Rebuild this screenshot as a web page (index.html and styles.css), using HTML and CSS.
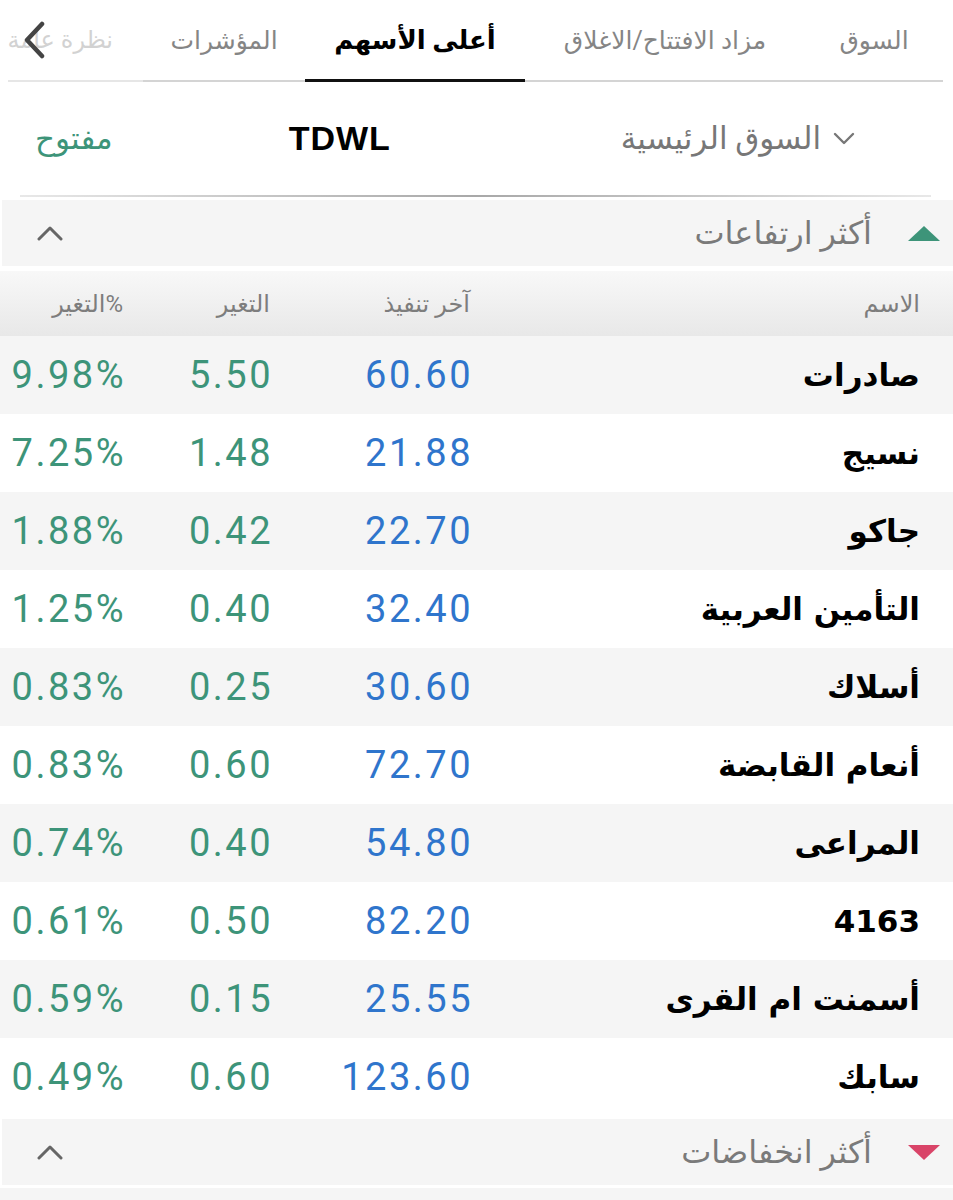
FILE: index.html
```html
<!DOCTYPE html>
<html lang="ar" dir="rtl">
<head>
    <meta charset="UTF-8">
    <meta name="viewport" content="width=device-width, initial-scale=1.0">
    <title>أعلى الأسهم - TDWL</title>
    <link rel="stylesheet" href="styles.css">
</head>
<body>
    <!-- Tabs -->
    <nav class="tabs">
        <a href="#" class="tab">السوق</a>
        <a href="#" class="tab">مزاد الافتتاح/الاغلاق</a>
        <a href="#" class="tab tab-active">أعلى الأسهم</a>
        <a href="#" class="tab">المؤشرات</a>
        <a href="#" class="tab tab-faded">نظرة عامة</a>
        <button class="back-btn" aria-label="back">
            <svg width="24" height="38" viewBox="0 0 24 38">
                <path d="M20 3 L5 19 L20 35" fill="none" stroke="#444" stroke-width="4.5" stroke-linecap="round" stroke-linejoin="round"/>
            </svg>
        </button>
    </nav>

    <!-- Market bar -->
    <div class="market-bar">
        <div class="market-select">
            <svg width="22" height="13" viewBox="0 0 22 13">
                <path d="M2 2 L11 11 L20 2" fill="none" stroke="#777" stroke-width="2.4" stroke-linecap="round" stroke-linejoin="round"/>
            </svg>
            <span>السوق الرئيسية</span>
        </div>
        <div class="market-code">TDWL</div>
        <div class="market-status">مفتوح</div>
    </div>
    <div class="divider"></div>

    <!-- Top gainers -->
    <section class="movers">
        <div class="movers-head">
            <span class="tri tri-up"></span>
            <span class="movers-title">أكثر ارتفاعات</span>
            <svg class="collapse" width="28" height="16" viewBox="0 0 28 16">
                <path d="M3 14 L14 3 L25 14" fill="none" stroke="#666" stroke-width="3" stroke-linecap="round" stroke-linejoin="round"/>
            </svg>
        </div>

        <div class="table-head">
            <span>الاسم</span>
            <span>آخر تنفيذ</span>
            <span>التغير</span>
            <span>%التغير</span>
        </div>

        <ul class="rows" id="gainers"></ul>
    </section>

    <!-- Top losers -->
    <section class="movers movers-down">
        <div class="movers-head">
            <span class="tri tri-down"></span>
            <span class="movers-title">أكثر انخفاضات</span>
            <svg class="collapse" width="28" height="16" viewBox="0 0 28 16">
                <path d="M3 14 L14 3 L25 14" fill="none" stroke="#666" stroke-width="3" stroke-linecap="round" stroke-linejoin="round"/>
            </svg>
        </div>
        <div class="movers-rest"></div>
    </section>

    <script>
        const gainers = [
            ["صادرات", "60.60", "5.50", "9.98%"],
            ["نسيج", "21.88", "1.48", "7.25%"],
            ["جاكو", "22.70", "0.42", "1.88%"],
            ["التأمين العربية", "32.40", "0.40", "1.25%"],
            ["أسلاك", "30.60", "0.25", "0.83%"],
            ["أنعام القابضة", "72.70", "0.60", "0.83%"],
            ["المراعى", "54.80", "0.40", "0.74%"],
            ["4163", "82.20", "0.50", "0.61%"],
            ["أسمنت ام القرى", "25.55", "0.15", "0.59%"],
            ["سابك", "123.60", "0.60", "0.49%"]
        ];

        const list = document.getElementById("gainers");
        gainers.forEach(g => {
            list.innerHTML += `
                <li class="row">
                    <span class="name">${g[0]}</span>
                    <span class="num num-last">${g[1]}</span>
                    <span class="num num-up">${g[2]}</span>
                    <span class="num num-up">${g[3]}</span>
                </li>`;
        });
    </script>
</body>
</html>
```

FILE: styles.css
```css
* {
    margin: 0;
    padding: 0;
    box-sizing: border-box;
}

body {
    width: 953px;
    background-color: #fff;
    color: #000;
    font-family: Roboto, "DejaVu Sans", sans-serif;
}

/* Tabs */
.tabs {
    position: relative;
    display: grid;
    grid-template-columns: 138px 280px 220px 162px 1fr;
    height: 82px;
    margin: 0 10px;
}

.tab {
    display: flex;
    align-items: center;
    justify-content: center;
    font-size: 25px;
    color: #858585;
    text-decoration: none;
    white-space: nowrap;
    border-bottom: 2px solid #d4d4d4;
}

.tab-active {
    color: #000;
    font-weight: bold;
    font-size: 26px;
    border-bottom: 3px solid #111;
}

.tab-faded {
    justify-content: flex-start;
    padding-right: 30px;
    font-size: 24px;
    color: #d2d2d2;
    border-bottom-color: #e6e6e6;
}

.back-btn {
    position: absolute;
    left: 12px;
    top: 21px;
    background: none;
    border: none;
    cursor: pointer;
}

/* Market bar */
.market-bar {
    display: flex;
    align-items: center;
    height: 113px;
    padding: 0 98px 0 35px;
}

.market-select {
    display: flex;
    align-items: center;
    gap: 12px;
    font-size: 31px;
    color: #777;
}

.market-code {
    margin-right: auto;
    margin-left: 176px;
    font-family: "Liberation Sans", Arial, sans-serif;
    font-weight: bold;
    font-size: 34px;
    letter-spacing: 1px;
}

.market-status {
    font-size: 31px;
    color: #3d9479;
}

.divider {
    height: 2px;
    margin: 0 22px 0 20px;
    background: linear-gradient(to right, #e8e8e8, #a8a8a8 50%, #e8e8e8);
}

/* Movers sections */
.movers {
    margin-top: 3px;
}

.movers-head {
    display: flex;
    align-items: center;
    height: 66px;
    padding: 0 13px 0 34px;
    margin-left: 2px;
    background-color: #f5f5f5;
}

.movers-title {
    margin-right: 36px;
    font-size: 32px;
    color: #7a7a7a;
}

.collapse {
    margin-right: auto;
}

.tri {
    width: 0;
    height: 0;
    border-left: 16px solid transparent;
    border-right: 16px solid transparent;
}

.tri-up {
    border-bottom: 15px solid #3d9479;
}

.tri-down {
    border-top: 15px solid #d94468;
}

.table-head, .row {
    display: grid;
    grid-template-columns: 450px 200px 147px 1fr;
    align-items: center;
    padding-right: 33px;
}

.table-head {
    height: 65px;
    margin-top: 5px;
    background: linear-gradient(#f8f8f8, #e8e8e8);
    font-size: 24px;
    color: #7d7d7d;
}

.rows {
    list-style: none;
}

.row {
    height: 78px;
}

.row:nth-child(odd) {
    background-color: #f5f5f5;
}

.name {
    font-family: "DejaVu Sans", sans-serif;
    font-size: 31px;
    font-weight: bold;
}

.num {
    direction: ltr;
    text-align: right;
    font-size: 38px;
    letter-spacing: 2.5px;
    margin-right: -3px;
}

.num-last {
    color: #2f75cc;
}

.num-up {
    color: #3d9479;
}

.movers-down {
    margin-top: 3px;
}

.movers-rest {
    height: 20px;
    margin-top: 3px;
    background-color: #f5f5f5;
}
```
